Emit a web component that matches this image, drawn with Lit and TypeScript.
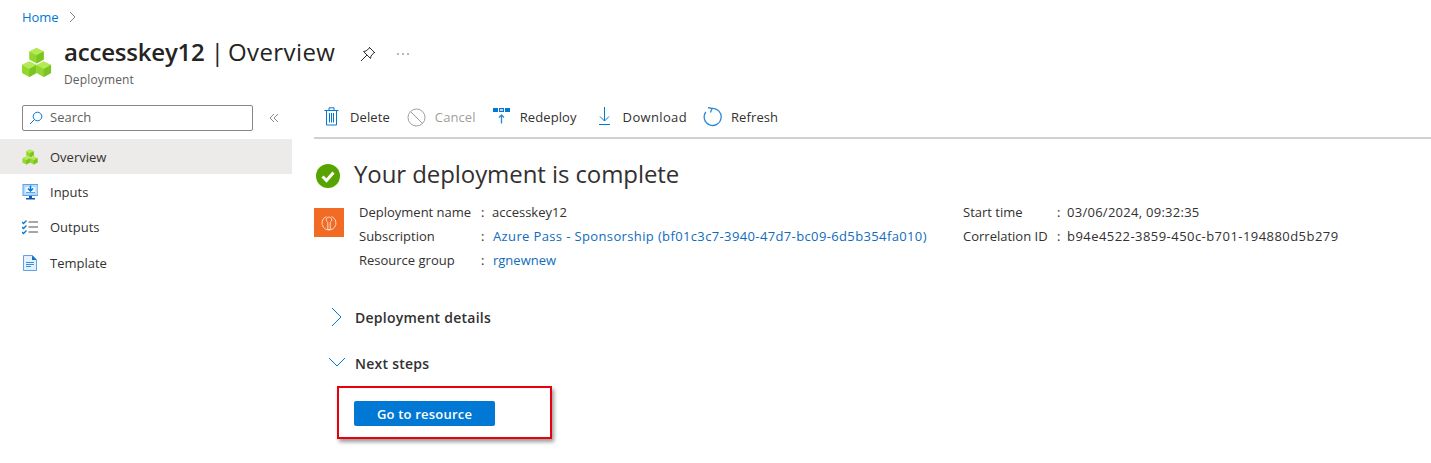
import { LitElement, html, css, svg } from "lit";
import { customElement } from "lit/decorators.js";

const cubes = (s: number) => html`<svg width=${s} height=${s} viewBox="0 0 32 32">
  ${[[16,1],[8.5,15],[23.5,15]].map(([x,y]) => svg`
    <path d="M${x} ${y}l7.500 3.600v8.200L${x} ${y+16}l-7.500-4.200v-8.200z" fill="#93d62e"/>
    <path d="M${x} ${y}l7.500 3.600L${x} ${y+7.6}l-7.500-4z" fill="#b4ea55"/>
    <path d="M${x} ${y+7.6}l7.500-4v8.200L${x} ${y+16}z" fill="#7cc423"/>`)}
</svg>`;

@customElement("app-root")
export class AppRoot extends LitElement {
  static styles = css`
    :host { display: block; width: 1431px; height: 463px; overflow: hidden; background: #fff;
      font-family: "Open Sans", "Noto Sans", sans-serif; font-size: 13px; color: #323130; }
    svg { display: block; flex: none; }
    a { color: #0f6cbd; text-decoration: none; }
    .link-wide { letter-spacing: 0.37px; }
    .date { letter-spacing: 0.27px; }
    .guid { letter-spacing: 0.45px; }
    .crumb { display: flex; align-items: center; gap: 10px; height: 34px; padding-left: 22px; color: #0078d4; letter-spacing: -0.1px; }
    .head { display: flex; height: 60px; padding-left: 22px; }
    .head-icon { margin: 13px 12px 0 -1px; }
    .titles { width: 295px; }
    h1 { margin: 0; font-size: 24px; font-weight: 400; line-height: 36px; color: #252423; white-space: nowrap; letter-spacing: -0.2px; }
    h1 b { font-weight: 600; }
    h1 span { letter-spacing: 0.42px; word-spacing: -3px; }
    .sub { font-size: 12px; line-height: 18px; margin-top: 1px; color: #605e5c; letter-spacing: 0.15px; }
    .head-actions { display: flex; align-items: flex-start; gap: 18px; padding-top: 11px; }
    .body { display: grid; grid-template-columns: 292px 1fr; column-gap: 22px; margin-top: 11px; }
    .side-top { display: flex; align-items: center; padding-left: 22px; gap: 16px; height: 26px; }
    .search { display: flex; align-items: center; gap: 7px; box-sizing: border-box; width: 231px; height: 26px; line-height: 22px;
      border: 1px solid #8a8886; border-radius: 2px; padding: 0 0 2px 6px; color: #605e5c; }
    .search svg { margin-top: 2px; }
    nav { margin-top: 8px; }
    .item { display: flex; align-items: center; gap: 12px; height: 35px; padding-left: 22px; }
    .item.on { background: #edebe9; }
    .item svg { width: 16px; height: 16px; }
    .item-last { padding-top: 2px; height: 33px; }
    .bar { display: flex; align-items: center; margin-top: -5px; border-bottom: 2px solid #d2d0ce; padding: 0 0 3px 9px; box-sizing: border-box; height: 39px; gap: 17px; }
    .tool { display: flex; align-items: center; gap: 9px; letter-spacing: 0.1px; }
    .tool.off { color: #a19f9d; }
    .tool.dl { margin-left: 4px; letter-spacing: 0.35px; }
    .tool.rf { margin-left: -1px; }
    .status { display: flex; align-items: center; gap: 14px; margin-top: 17px; padding-left: 2px; height: 36px; }
    .status svg { margin-top: 4px; }
    h2 { margin: -2px 0 0; font-size: 24px; font-weight: 400; color: #323130; letter-spacing: -0.08px; white-space: nowrap; }
    .summary { display: flex; margin-top: 8px; height: 72px; }
    .tile { width: 30px; height: 29px; background: #f26b25; display: flex; align-items: center; justify-content: center; margin-top: 8px; }
    .facts { display: grid; grid-template-columns: 122px 11px auto; grid-auto-rows: 24px; align-items: center; margin-left: 15px; width: 589px; white-space: nowrap; }
    .facts.two { grid-template-columns: 94px 10px auto; width: auto; }
    .facts a { margin-left: 1px; }
    .sec { display: flex; align-items: center; gap: 10px; font-size: 14px; font-weight: 600; color: #323130; height: 24px; padding-left: 15px; letter-spacing: 0.25px; }
    .sec svg { width: 16px; }
    .sec1 { margin-top: 33px; }
    .sec2 { margin-top: 22px; }
    .callout { box-sizing: border-box; width: 215px; height: 53px; margin: 11px 0 0 23px; border: 2px solid #e8000d;
      box-shadow: 2px 3px 4px rgba(0,0,0,.4); padding: 13px 0 0 15px; }
    .btn { display: flex; align-items: center; justify-content: center; width: 141px; height: 25px; background: #0078d4;
      color: #fff; font-weight: 600; border-radius: 2px; letter-spacing: 0.2px; }
  `;

  render() {
    return html`
      <div class="crumb"><span>Home</span>
        <svg width="10" height="12" viewBox="0 0 10 12"><path d="M2 1l5 5-5 5" fill="none" stroke="#8a8886"/></svg></div>
      <div class="head">
        <div class="head-icon">${cubes(31)}</div>
        <div class="titles"><h1><b>accesskey12</b> <span>| Overview</span></h1><div class="sub">Deployment</div></div>
        <div class="head-actions">
          <svg width="18" height="18" viewBox="0 0 18 18" fill="none" stroke="#323130"><path d="M10 2l6 6M11 2.500L7 6 4.500 6.500l7 7L12 11l3.500-4M8 10l-6 6"/></svg>
          <svg width="16" height="18" viewBox="0 0 16 18" fill="#605e5c"><circle cx="3" cy="9" r=".8"/><circle cx="8" cy="9" r=".8"/><circle cx="13" cy="9" r=".8"/></svg>
        </div>
      </div>
      <div class="body">
        <aside>
          <div class="side-top">
            <div class="search">
              <svg width="14" height="14" viewBox="0 0 14 14" fill="none" stroke="#0078d4"><circle cx="8.500" cy="5.500" r="4.300"/><path d="M5.500 8.500L1 13"/></svg>
              Search</div>
            <svg width="10" height="10" viewBox="0 0 10 10" fill="none" stroke="#8a8886"><path d="M5 1L1 5l4 4M9 1L5 5l4 4"/></svg>
          </div>
          <nav>
            <div class="item on">${cubes(16)}Overview</div>
            <div class="item"><svg viewBox="0 0 16 16"><rect x="1" y="0.500" width="15" height="11" fill="#b5dcf6" stroke="#5ea0ef"/><rect x="3.500" y="3" width="10" height="6" fill="#eef7fd"/><path d="M8.500 1.500v5M6 4.500l2.500 2.500L11 4.500" stroke="#0078d4" stroke-width="1.500" fill="none"/><path d="M4 8.500h9" stroke="#5ea0ef"/><path d="M7 12h3v2h3v1.500H4V14h3z" fill="#0a5cad"/></svg>Inputs</div>
            <div class="item"><svg viewBox="0 0 16 16" fill="none"><path d="M0 3l1.500 1.500L4.500 1.500M0 8l1.500 1.500L4.500 6.500M0 13l1.500 1.500L4.500 11.500" stroke="#0078d4" stroke-width="1.300"/><path d="M6.500 3h10M6.500 8h10M6.500 13h10" stroke="#a8a6a4" stroke-width="2"/></svg>Outputs</div>
            <div class="item item-last"><svg viewBox="0 0 16 16"><path d="M1.500 .5h9l4 4v11h-13z" fill="#e3f1fb" stroke="#5ea0ef"/><path d="M10 .5v4.500h4.500z" fill="#0a6fc9"/><path d="M4 7.500h8M4 9.500h8M4 11.500h5" stroke="#3c8fdc"/></svg>Template</div>
          </nav>
        </aside>
        <main>
          <div class="bar">
            <div class="tool"><svg width="18" height="20" viewBox="0 0 18 20" fill="none" stroke="#0078d4"><path d="M3.500 3.500h10v14.500h-10zM1.500 3.500h14M6 3.500V.8h5v2.700M6.500 6v9.500M8.500 6v9.500M10.500 6v9.500"/></svg>Delete</div>
            <div class="tool off"><svg width="19" height="19" viewBox="0 0 19 19" fill="none" stroke="#a19f9d"><circle cx="9.500" cy="9.500" r="8.500"/><path d="M3.500 3.500l12 12"/></svg>Cancel</div>
            <div class="tool"><svg width="18" height="18" viewBox="0 0 18 18"><path d="M0 0h5v4H0zM12 0h5v4h-5z" fill="#0078d4"/><rect x="6.500" y=".5" width="4" height="3" fill="#d8c8f0" stroke="#0078d4"/><path d="M8.500 15.500V7M6 9.500l2.500-2.500L11 9.500" stroke="#2b88d8" stroke-width="1.300" fill="none"/></svg>Redeploy</div>
            <div class="tool dl"><svg width="16" height="20" viewBox="0 0 16 20" fill="none" stroke="#0078d4"><path d="M6.500 0v14M2 9.500l4.500 4.500L11 9.500M1 17.500h11"/></svg>Download</div>
            <div class="tool rf"><svg width="19" height="20" viewBox="0 0 19 20" fill="none" stroke="#2b88d8" stroke-width="1.300"><path d="M9 1.500A8.500 8.500 0 1 1 2.800 5M5 .5l4 1-1.500 4"/></svg>Refresh</div>
          </div>
          <div class="status">
            <svg width="24" height="24" viewBox="0 0 24 24"><circle cx="12" cy="12" r="12" fill="#57a300"/><path d="M6.500 12.500l4 4 7-8" fill="none" stroke="#fff" stroke-width="3"/></svg>
            <h2>Your deployment is complete</h2>
          </div>
          <div class="summary">
            <div class="tile"><svg width="16" height="16" viewBox="0 0 16 16" fill="none" stroke="#fbd8c5"><path d="M5.500 1.500A7 7 0 1 0 10.500 1.500"/><path d="M8 2a2.800 2.800 0 0 1 1.200 5.300V14.500H6.800V7.300A2.800 2.800 0 0 1 8 2z"/></svg></div>
            <div class="facts">
              <span>Deployment name</span><span>:</span><span>accesskey12</span>
              <span>Subscription</span><span>:</span><a class="link-wide">Azure Pass - Sponsorship (bf01c3c7-3940-47d7-bc09-6d5b354fa010)</a>
              <span>Resource group</span><span>:</span><a>rgnewnew</a>
            </div>
            <div class="facts two">
              <span>Start time</span><span>:</span><span class="date">03/06/2024, 09:32:35</span>
              <span>Correlation ID</span><span>:</span><span class="guid">b94e4522-3859-450c-b701-194880d5b279</span>
            </div>
          </div>
          <div class="sec sec1"><svg height="20" viewBox="0 0 16 20" fill="none" stroke="#0078d4"><path d="M3 1l9 9-9 9"/></svg>Deployment details</div>
          <div class="sec sec2"><svg height="12" viewBox="0 0 16 12" fill="none" stroke="#0078d4"><path d="M0 1l8 8 8-8"/></svg>Next steps</div>
          <div class="callout"><div class="btn">Go to resource</div></div>
        </main>
      </div>`;
  }
}
